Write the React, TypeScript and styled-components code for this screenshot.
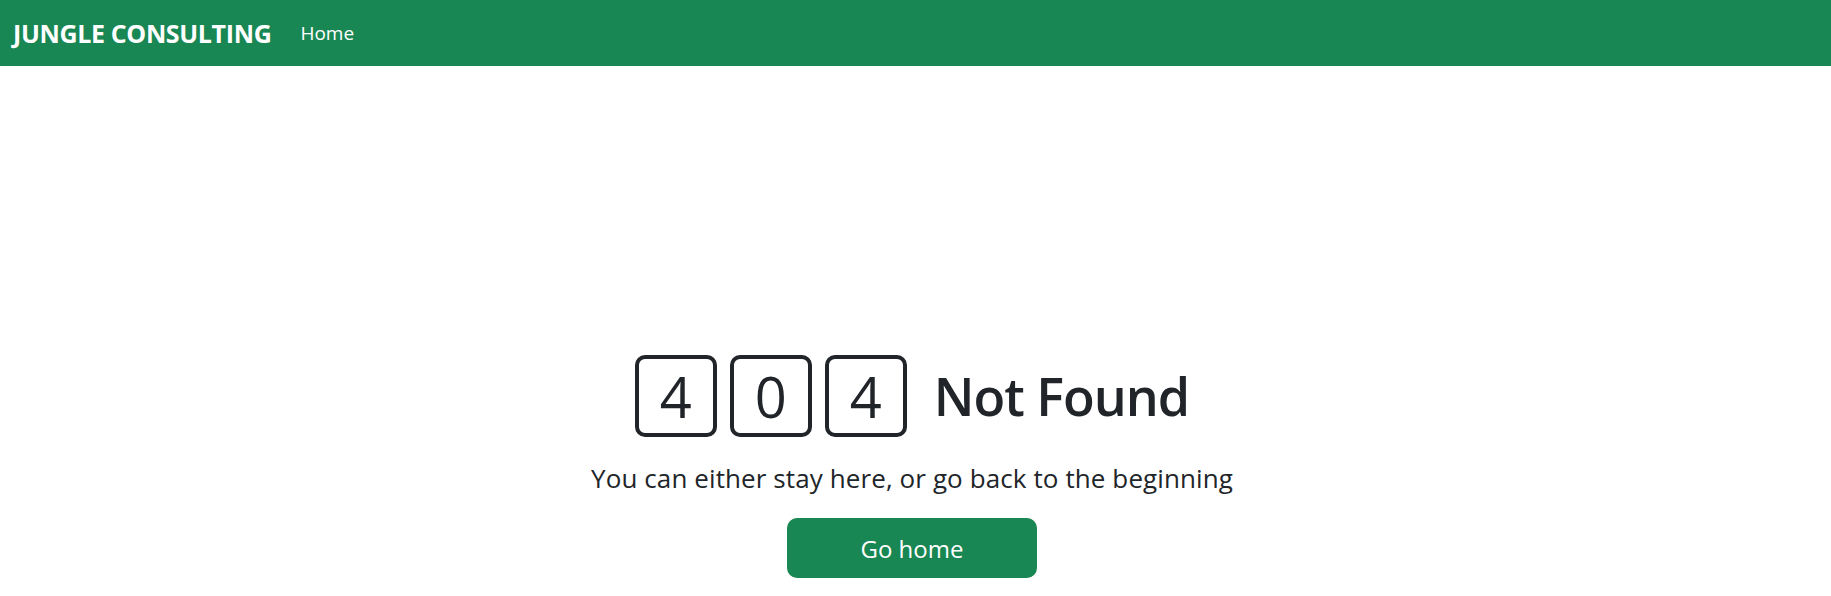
import * as React from "react";
import styled, { createGlobalStyle } from "styled-components";

const GlobalStyle = createGlobalStyle`
	html, body {
		margin: 0;
		padding: 0;
		background: #ffffff;
		font-family: "Open Sans", "Noto Sans", Arial, sans-serif;
		color: #212529;
	}
	html {
		overflow-y: scroll;
	}
	::-webkit-scrollbar {
		width: 6px;
		background: #f0f0f0;
	}
	::-webkit-scrollbar-track {
		margin-top: 13px;
	}
	::-webkit-scrollbar-thumb {
		background: #cdcdcd;
	}
`;

const digits = ["4", "0", "4"];

export default function App() {
	return (
		<>
			<GlobalStyle />
			<Navbar>
				<Brand href="#">JUNGLE CONSULTING</Brand>
				<NavLink href="#">Home</NavLink>
			</Navbar>
			<Main>
				<CodeRow>
					{digits.map((d, i) => (
						<DigitBox key={i}>{d}</DigitBox>
					))}
					<Title>Not Found</Title>
				</CodeRow>
				<Lead>You can either stay here, or go back to the beginning</Lead>
				<HomeButton>Go home</HomeButton>
			</Main>
		</>
	);
}

const Navbar = styled.nav`
	height: 66px;
	background: #198754;
	display: flex;
	align-items: center;
	padding: 0 13px;
	box-sizing: border-box;
`;

const Brand = styled.a`
	color: #ffffff;
	text-decoration: none;
	font-weight: 700;
	font-size: 25px;
	letter-spacing: -0.35px;
`;

const NavLink = styled.a`
	color: #ffffff;
	text-decoration: none;
	font-size: 19px;
	margin-left: 29px;
`;

const Main = styled.main`
	display: flex;
	flex-direction: column;
	align-items: center;
	padding: 289px 7px 30px 0;
`;

const CodeRow = styled.div`
	display: flex;
	align-items: center;
	gap: 13px;
`;

const DigitBox = styled.div`
	width: 82px;
	height: 82px;
	box-sizing: border-box;
	border: 4px solid #212529;
	border-radius: 10px;
	display: flex;
	align-items: center;
	justify-content: center;
	font-size: 56px;
	line-height: 1;
`;

const Title = styled.h1`
	margin: 0 0 0 14px;
	font-size: 52px;
	font-weight: 600;
	letter-spacing: -1px;
	line-height: 1.2;
`;

const Lead = styled.p`
	margin: 22px 0 0;
	font-size: 26px;
	line-height: 1.5;
	letter-spacing: 0.1px;
`;

const HomeButton = styled.button`
	margin-top: 20px;
	width: 250px;
	height: 60px;
	border: none;
	border-radius: 10px;
	background: #198754;
	color: #ffffff;
	font-family: inherit;
	font-size: 24px;
	cursor: pointer;
`;
